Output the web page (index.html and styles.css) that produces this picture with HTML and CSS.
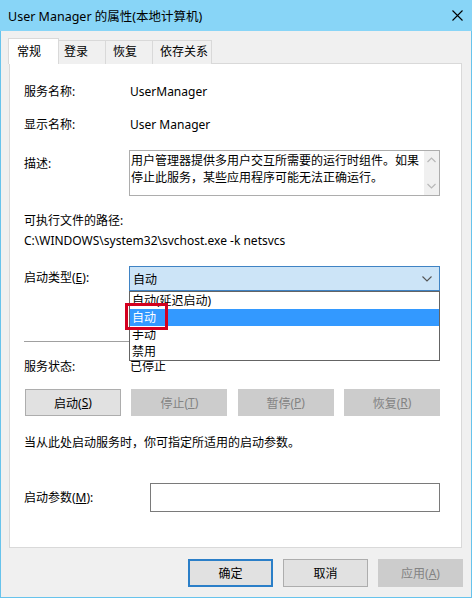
FILE: index.html
```html
<!DOCTYPE html>
<html lang="zh-CN">
<head>
<meta charset="utf-8">
<title>User Manager 的属性(本地计算机)</title>
<link rel="stylesheet" href="styles.css">
</head>
<body>
<div class="window">
  <div class="titlebar">
    <span class="title">User Manager 的属性(本地计算机)</span>
    <svg class="close" width="11" height="11" viewBox="0 0 11 11"><path d="M0.5 0.5 L10.5 10.5 M10.5 0.5 L0.5 10.5" stroke="#000" stroke-width="1.1" fill="none"/></svg>
  </div>
  <div class="body">
    <div class="tabs">
      <div class="tab tab-1 active">常规</div>
      <div class="tab tab-2">登录</div>
      <div class="tab tab-3">恢复</div>
      <div class="tab tab-4">依存关系</div>
    </div>
    <div class="panel">
      <div class="row r-name"><span class="label">服务名称:</span><span class="value">UserManager</span></div>
      <div class="row r-display"><span class="label">显示名称:</span><span class="value">User Manager</span></div>
      <div class="row r-desc">
        <span class="label desc-label">描述:</span>
        <div class="descbox">
          <div class="desctext">用户管理器提供多用户交互所需要的运行时组件。如果停止此服务，某些应用程序可能无法正确运行。</div>
          <div class="scroll">
            <svg width="9" height="6" viewBox="0 0 9 6"><path d="M0.5 5 L4.5 1 L8.5 5" stroke="#b8b8b8" stroke-width="1.2" fill="none"/></svg>
            <svg width="9" height="6" viewBox="0 0 9 6"><path d="M0.5 1 L4.5 5 L8.5 1" stroke="#b8b8b8" stroke-width="1.2" fill="none"/></svg>
          </div>
        </div>
      </div>
      <div class="line r-pathlabel">可执行文件的路径:</div>
      <div class="line r-path">C:\WINDOWS\system32\svchost.exe -k netsvcs</div>
      <div class="row r-type">
        <span class="label type-label">启动类型(<u>E</u>):</span>
        <div class="combo-wrap">
          <div class="combo">
            <span>自动</span>
            <svg width="10" height="6" viewBox="0 0 10 6"><path d="M0.5 0.5 L5 5 L9.5 0.5" stroke="#555" stroke-width="1.1" fill="none"/></svg>
          </div>
          <div class="dropdown">
            <div class="opt">自动(延迟启动)</div>
            <div class="opt selected">自动</div>
            <div class="opt">手动</div>
            <div class="opt">禁用</div>
            <div class="mark"></div>
          </div>
        </div>
      </div>
      <div class="sep"></div>
      <div class="row r-status"><span class="label">服务状态:</span><span class="value">已停止</span></div>
      <div class="svc-buttons">
        <div class="btn">启动(<u>S</u>)</div>
        <div class="btn disabled">停止(<u>T</u>)</div>
        <div class="btn disabled">暂停(<u>P</u>)</div>
        <div class="btn disabled">恢复(<u>R</u>)</div>
      </div>
      <div class="line r-hint">当从此处启动服务时，你可指定所适用的启动参数。</div>
      <div class="row r-param">
        <span class="label param-label">启动参数(<u>M</u>):</span>
        <div class="input"></div>
      </div>
    </div>
    <div class="footer">
      <div class="btn wide default">确定</div>
      <div class="btn wide">取消</div>
      <div class="btn wide disabled">应用(<u>A</u>)</div>
    </div>
  </div>
</div>
</body>
</html>
```

FILE: styles.css
```css
* { box-sizing: border-box; }
html, body { margin: 0; padding: 0; }
body {
  width: 472px;
  height: 598px;
  overflow: hidden;
  font-family: "Noto Sans", "Noto Sans CJK SC", sans-serif;
  font-size: 12px;
  color: #000;
  background: #f0f0f0;
}
u { text-decoration: underline; text-underline-offset: 1px; }

.window {
  width: 472px;
  height: 598px;
  border: 1px solid #67c3ec;
  border-top: none;
  background: #f0f0f0;
  display: flex;
  flex-direction: column;
}
.titlebar {
  height: 31px;
  flex: none;
  background: #88d5f7;
  display: flex;
  align-items: center;
  justify-content: space-between;
  padding: 0 9px 1px 8px;
  margin: 0 -1px;
}
.title { font-size: 12.5px; }

.body {
  flex: 1;
  display: flex;
  flex-direction: column;
  padding: 8px 9px 0 8px;
}

.tabs {
  display: flex;
  align-items: flex-end;
  height: 25px;
  position: relative;
  z-index: 1;
  margin-bottom: -1px;
}
.tab {
  height: 24px;
  line-height: 22px;
  border: 1px solid #d9d9d9;
  border-bottom: none;
  background: #f0f0f0;
  margin-left: -1px;
}
.tab.active {
  height: 26px;
  background: #fff;
  line-height: 26px;
}
.tab-1 { width: 51px; padding-left: 8px; margin-left: -1px; }
.tab-2 { width: 47px; padding-left: 5px; border-left: none; margin-left: 0; }
.tab-3 { width: 48px; padding-left: 7px; }
.tab-4 { width: 60px; padding-left: 7px; }

.panel {
  height: 485px;
  flex: none;
  background: #fff;
  border: 1px solid #d9d9d9;
  padding: 18px 21px 0 14px;
  display: flex;
  flex-direction: column;
}

.row { display: flex; align-items: flex-start; }
.label { width: 105px; flex: none; line-height: 20px; }
.value { line-height: 20px; padding-left: 1px; }
.line { line-height: 20px; height: 20px; }

.r-name { height: 20px; }
.r-display { height: 20px; margin-top: 13px; }
.r-desc { margin-top: 15px; height: 46px; }
.desc-label { padding-top: 4px; }
.descbox {
  flex: 1;
  height: 46px;
  border: 1px solid #adadad;
  display: flex;
}
.desctext {
  flex: 1;
  padding: 1px 4px 0 1px;
  line-height: 17px;
}
.scroll {
  width: 15px;
  flex: none;
  background: #f0f0f0;
  display: flex;
  flex-direction: column;
  justify-content: space-between;
  align-items: center;
  padding: 6px 0;
}
.r-pathlabel { margin-top: 15px; }

.r-type { margin-top: 15px; height: 24px; }
.type-label { line-height: 24px; }
.combo-wrap { flex: 1; position: relative; }
.combo {
  height: 25px;
  background: #cce4f7;
  border: 1px solid #3f83c4;
  display: flex;
  align-items: center;
  justify-content: space-between;
  padding: 0 7px 0 3px;
}
.dropdown {
  position: absolute;
  left: 0;
  right: 0;
  top: 25px;
  background: #fff;
  border: 1px solid #646464;
  z-index: 5;
}
.opt {
  height: 17px;
  line-height: 17px;
  padding-left: 2px;
}
.opt.selected { background: #3399ff; color: #fff; }
.mark {
  position: absolute;
  left: -5px;
  top: 11px;
  width: 43px;
  height: 27px;
  border: 3px solid #d4001f;
}

.sep {
  height: 1px;
  background: #a0a0a0;
  margin-top: 51px;
}
.r-status { margin-top: 15px; height: 20px; }

.svc-buttons {
  margin-top: 12px;
  height: 27px;
  display: flex;
  justify-content: space-between;
  padding-left: 1px;
}
.btn {
  height: 27px;
  width: 96px;
  background: #e1e1e1;
  border: 1px solid #adadad;
  display: flex;
  align-items: center;
  justify-content: center;
}
.btn.disabled {
  background: #cccccc;
  border-color: #cccccc;
  color: #838383;
}
.r-hint { margin-top: 17px; }

.r-param { margin-top: 30px; height: 29px; }
.param-label { width: 126px; line-height: 29px; }
.input {
  flex: 1;
  height: 29px;
  border: 1px solid #7a7a7a;
  background: #fff;
}

.footer {
  display: flex;
  justify-content: flex-end;
  gap: 10px;
  margin-top: 11px;
  margin-right: -1px;
}
.btn.wide { width: 85px; height: 28px; }
.btn.default { border: 2px solid #2b7fc8; }
```
